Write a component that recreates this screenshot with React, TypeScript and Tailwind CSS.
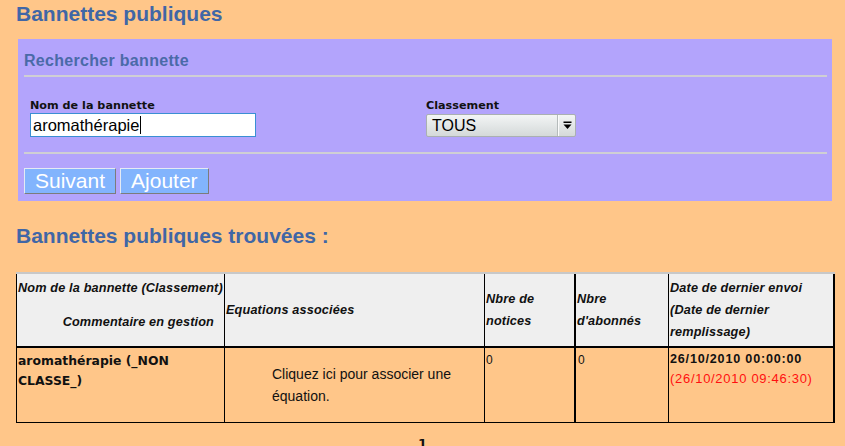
import React from "react";

const headCell = "border-r border-black flex items-center pl-px";

const App = () => {
  return (
    <div className="w-[845px] h-[446px] overflow-hidden bg-[#ffc689] font-['Liberation_Sans',Arial,sans-serif] text-[#111]">
      {/* Title */}
      <h1 className="pl-[16px] pt-[2px] text-[21px] leading-[24px] font-bold text-[#4066a6]">
        Bannettes publiques
      </h1>

      {/* Search panel */}
      <div className="mt-[13px] ml-[18px] w-[814px] bg-[#b3a4fc] pt-[12px] pb-[7px] pl-[6px] pr-[5px]">
        <h2 className="text-[16px] tracking-[0.3px] leading-[20px] font-bold text-[#4a6aa8]">
          Rechercher bannette
        </h2>
        <div className="mt-[4px] h-[2px] bg-[#cfcfd4]" />

        <div className="mt-[22px] pl-[6px] grid grid-cols-[396px_1fr]">
          <div>
            <div className="font-['DejaVu_Sans',sans-serif] text-[11.2px] leading-[14px] font-bold text-[#111]">
              Nom de la bannette
            </div>
            <div className="w-[226px] h-[24px] bg-white border border-[#3a8fd3] pl-[2px] flex items-center text-[16.5px] leading-[22px] text-black">
              <span>aromathérapie</span>
              <span className="ml-px w-px h-[18px] bg-black" />
            </div>
          </div>
          <div>
            <div className="font-['DejaVu_Sans',sans-serif] text-[11.2px] leading-[14px] font-bold text-[#111]">
              Classement
            </div>
            <div className="mt-px w-[150px] h-[23px] flex rounded-[2px] border border-[#aab0b1] bg-gradient-to-b from-[#f3f5f5] to-[#d4d9d9]">
              <span className="flex-1 pl-[5px] text-[16px] leading-[21px] text-black">TOUS</span>
              <span className="w-[17px] flex items-center justify-center border-l border-[#fbfbfb] shadow-[-1px_0_0_#b5bbbb]">
                <svg width="9" height="9" viewBox="0 0 9 9">
                  <rect x="0.5" y="0.5" width="8" height="1.5" fill="#000" />
                  <path d="M0.5 3.5h8l-4 4.5z" fill="#000" />
                </svg>
              </span>
            </div>
          </div>
        </div>

        <div className="mt-[15px] h-[2px] bg-[#cfcfd4]" />

        <div className="mt-[14px] flex gap-[4px]">
          <button className="bg-[#82b4fd] text-white text-[21px] leading-[24px] px-[10px] border border-t-[#e4eaf4] border-l-[#e4eaf4] border-r-[#7c7c7c] border-b-[#7c7c7c]">
            Suivant
          </button>
          <button className="bg-[#82b4fd] text-white text-[21px] leading-[24px] px-[10px] border border-t-[#e4eaf4] border-l-[#e4eaf4] border-r-[#7c7c7c] border-b-[#7c7c7c]">
            Ajouter
          </button>
        </div>
      </div>

      {/* Results */}
      <h2 className="mt-[23px] pl-[16px] text-[21px] leading-[24px] font-bold text-[#4066a6]">
        Bannettes publiques trouvées :
      </h2>

      <div className="mt-[24px] ml-[16px] w-[819px] border-t-2 border-[#c8c8c8]">
        {/* Header row */}
        <div className="grid grid-cols-[208px_260px_91px_93px_166px] h-[74px] bg-[#efefef] border-l border-l-black border-b-2 border-b-black text-[12.7px] tracking-[0.15px] leading-[22px] font-bold italic">
          <div className="border-r border-black pt-[3px] pl-px">
            <div className="whitespace-nowrap">Nom de la bannette (Classement)</div>
            <div className="mt-[12px] text-right pr-[10px] whitespace-nowrap">Commentaire en gestion</div>
          </div>
          <div className={headCell}>Equations associées</div>
          <div className="border-r-2 border-black flex items-center pl-px">
            <span>
              Nbre de
              <br />
              notices
            </span>
          </div>
          <div className={headCell}>
            <span>
              Nbre
              <br />
              d'abonnés
            </span>
          </div>
          <div className="border-r-2 border-black flex items-center pl-px">
            <span>
              Date de dernier envoi
              <br />
              (Date de dernier
              <br />
              remplissage)
            </span>
          </div>
        </div>

        {/* Data row */}
        <div className="grid grid-cols-[208px_260px_91px_93px_166px] h-[75px] border-l border-l-black border-b border-b-black">
          <div className="border-r border-black pt-[3px] pl-px font-['DejaVu_Sans',sans-serif] text-[12.4px] leading-[20px] font-bold">
            aromathérapie (_NON CLASSE_)
          </div>
          <div className="border-r border-black flex items-center pl-[47px] text-[14px] leading-[22px]">
            <span>Cliquez ici pour associer une équation.</span>
          </div>
          <div className="border-r-2 border-black pt-[4px] pl-px text-[12px] leading-[16px]">0</div>
          <div className="border-r border-black pt-[4px] pl-[2px] text-[12px] leading-[16px]">0</div>
          <div className="border-r-2 border-black pt-[2px] pl-px">
            <div className="text-[12.6px] tracking-[0.8px] leading-[19px] font-bold">26/10/2010 00:00:00</div>
            <div className="text-[13px] tracking-[0.7px] leading-[19px] text-[#ff1010]">(26/10/2010 09:46:30)</div>
          </div>
        </div>
      </div>

      <div className="mt-[13px] text-center font-['DejaVu_Sans',sans-serif] text-[13px] leading-[16px] font-bold">
        1
      </div>
    </div>
  );
};

export default App;
